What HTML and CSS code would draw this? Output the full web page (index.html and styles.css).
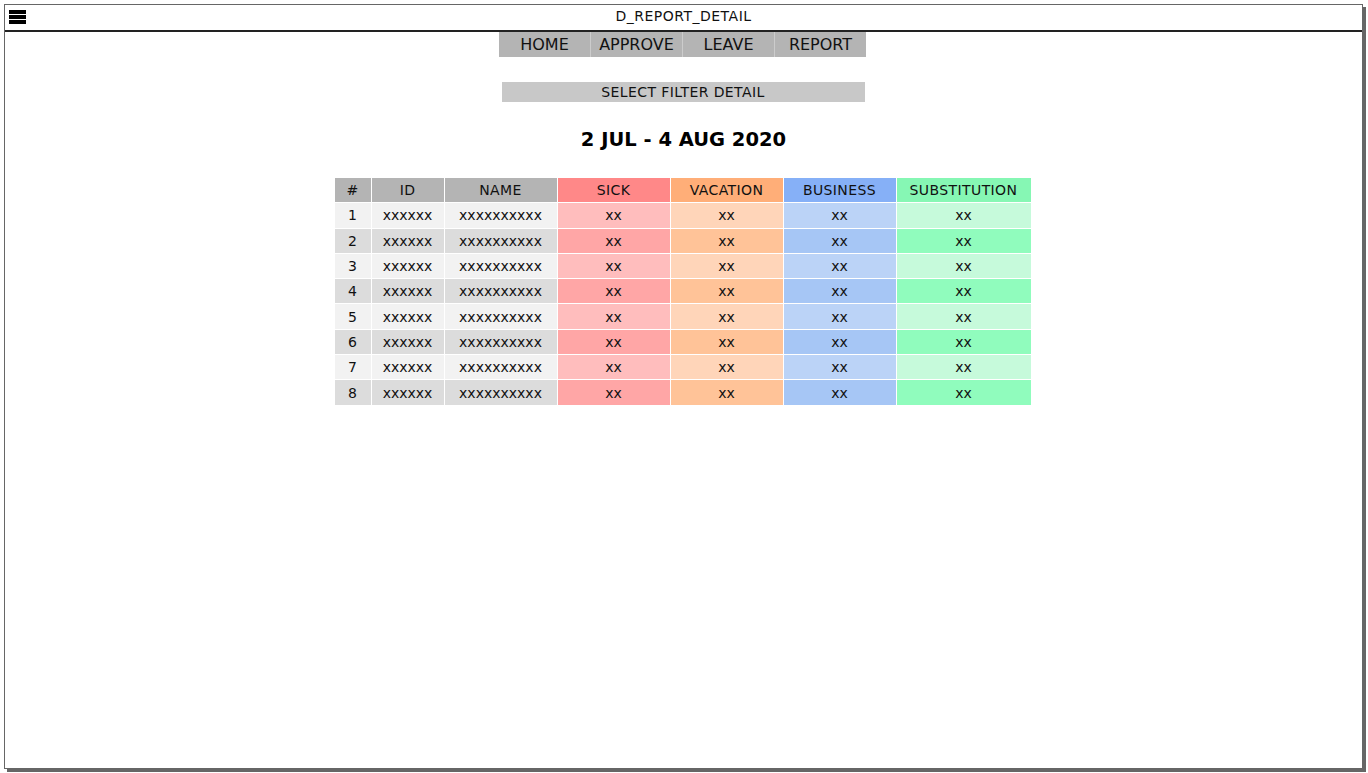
FILE: index.html
```html
<!DOCTYPE html>
<html>
<head>
<meta charset="utf-8">
<link rel="stylesheet" href="styles.css">
</head>
<body>
<div class="frame">
  <div class="titlebar">
    <div class="menu-icon"><span></span><span></span><span></span></div>
    <div class="title">D_REPORT_DETAIL</div>
  </div>
  <div class="content">
    <nav class="nav">
      <div class="nav-item">HOME</div>
      <div class="nav-item">APPROVE</div>
      <div class="nav-item">LEAVE</div>
      <div class="nav-item">REPORT</div>
    </nav>
    <div class="filter">SELECT FILTER DETAIL</div>
    <h1 class="range">2 JUL - 4 AUG 2020</h1>
    <table class="report">
      <thead>
        <tr>
          <th class="c-num">#</th>
          <th class="c-id">ID</th>
          <th class="c-name">NAME</th>
          <th class="c-sick">SICK</th>
          <th class="c-vac">VACATION</th>
          <th class="c-bus">BUSINESS</th>
          <th class="c-sub">SUBSTITUTION</th>
        </tr>
      </thead>
      <tbody>
        <tr><td class="c-num">1</td><td class="c-id">xxxxxx</td><td class="c-name">xxxxxxxxxx</td><td class="c-sick">xx</td><td class="c-vac">xx</td><td class="c-bus">xx</td><td class="c-sub">xx</td></tr>
        <tr><td class="c-num">2</td><td class="c-id">xxxxxx</td><td class="c-name">xxxxxxxxxx</td><td class="c-sick">xx</td><td class="c-vac">xx</td><td class="c-bus">xx</td><td class="c-sub">xx</td></tr>
        <tr><td class="c-num">3</td><td class="c-id">xxxxxx</td><td class="c-name">xxxxxxxxxx</td><td class="c-sick">xx</td><td class="c-vac">xx</td><td class="c-bus">xx</td><td class="c-sub">xx</td></tr>
        <tr><td class="c-num">4</td><td class="c-id">xxxxxx</td><td class="c-name">xxxxxxxxxx</td><td class="c-sick">xx</td><td class="c-vac">xx</td><td class="c-bus">xx</td><td class="c-sub">xx</td></tr>
        <tr><td class="c-num">5</td><td class="c-id">xxxxxx</td><td class="c-name">xxxxxxxxxx</td><td class="c-sick">xx</td><td class="c-vac">xx</td><td class="c-bus">xx</td><td class="c-sub">xx</td></tr>
        <tr><td class="c-num">6</td><td class="c-id">xxxxxx</td><td class="c-name">xxxxxxxxxx</td><td class="c-sick">xx</td><td class="c-vac">xx</td><td class="c-bus">xx</td><td class="c-sub">xx</td></tr>
        <tr><td class="c-num">7</td><td class="c-id">xxxxxx</td><td class="c-name">xxxxxxxxxx</td><td class="c-sick">xx</td><td class="c-vac">xx</td><td class="c-bus">xx</td><td class="c-sub">xx</td></tr>
        <tr><td class="c-num">8</td><td class="c-id">xxxxxx</td><td class="c-name">xxxxxxxxxx</td><td class="c-sick">xx</td><td class="c-vac">xx</td><td class="c-bus">xx</td><td class="c-sub">xx</td></tr>
      </tbody>
    </table>
  </div>
</div>
</body>
</html>
```
FILE: styles.css
```css
* { box-sizing: border-box; }
html, body { margin: 0; padding: 0; background: #fff; }
body {
  padding: 4px;
  font-family: "DejaVu Sans", Verdana, sans-serif;
  color: #111;
}
.frame {
  width: 1359px;
  height: 765px;
  border: 1px solid #666;
  box-shadow: 3px 3px 0 #666;
  background: #fff;
  display: flex;
  flex-direction: column;
}
.titlebar {
  position: relative;
  height: 27px;
  border-bottom: 2px solid #222;
  display: flex;
  align-items: flex-start;
  justify-content: center;
  padding-top: 3px;
}
.menu-icon {
  position: absolute;
  left: 4px;
  top: 5px;
  width: 17px;
  display: flex;
  flex-direction: column;
  gap: 1px;
}
.menu-icon span {
  display: block;
  height: 4px;
  background: #000;
}
.title {
  font-size: 14px;
  line-height: 16px;
  letter-spacing: 0.5px;
}
.content {
  display: flex;
  flex-direction: column;
  align-items: center;
}
.nav {
  display: flex;
  margin-left: -2px;
  background: #b4b4b4;
}
.nav-item {
  width: 92px;
  height: 25px;
  font-size: 16px;
  line-height: 25px;
  text-align: center;
  color: #111;
  border-left: 1px solid #cccccc;
}
.nav-item:first-child { border-left: none; width: 91px; }
.filter {
  margin-top: 25px;
  margin-left: -1px;
  width: 363px;
  height: 20px;
  background: #c8c8c8;
  font-size: 14px;
  line-height: 20px;
  letter-spacing: 0.4px;
  text-align: center;
  color: #111;
}
.range {
  margin: 26px 0 0 0;
  font-size: 19.5px;
  font-weight: bold;
  line-height: 24px;
  color: #000;
}
.report {
  margin-top: 25px;
  border-collapse: separate;
  border-spacing: 1px;
  font-size: 14px;
  margin-left: -2px;
}
.report th, .report td {
  height: 24.3px;
  padding: 0;
  text-align: center;
  font-weight: normal;
  color: #111;
}
.report th { background: #b4b4b4; letter-spacing: 0.4px; }
.c-num { width: 36px; }
.c-id { width: 72px; }
.c-name { width: 112px; }
.c-sick, .c-vac, .c-bus { width: 112px; }
.c-sub { width: 134px; }

.report tbody tr:nth-child(odd) td { background: #f2f2f2; }
.report tbody tr:nth-child(even) td { background: #dcdcdc; }

.report th.c-sick { background: #ff8888; }
.report tbody tr:nth-child(odd) td.c-sick { background: #ffbdbd; }
.report tbody tr:nth-child(even) td.c-sick { background: #ffa6a6; }

.report th.c-vac { background: #ffae78; }
.report tbody tr:nth-child(odd) td.c-vac { background: #ffd5b9; }
.report tbody tr:nth-child(even) td.c-vac { background: #ffc398; }

.report th.c-bus { background: #86b0f7; }
.report tbody tr:nth-child(odd) td.c-bus { background: #bbd3f7; }
.report tbody tr:nth-child(even) td.c-bus { background: #a6c6f5; }

.report th.c-sub { background: #86f7b4; }
.report tbody tr:nth-child(odd) td.c-sub { background: #c6fadb; }
.report tbody tr:nth-child(even) td.c-sub { background: #90fcbd; }
```
